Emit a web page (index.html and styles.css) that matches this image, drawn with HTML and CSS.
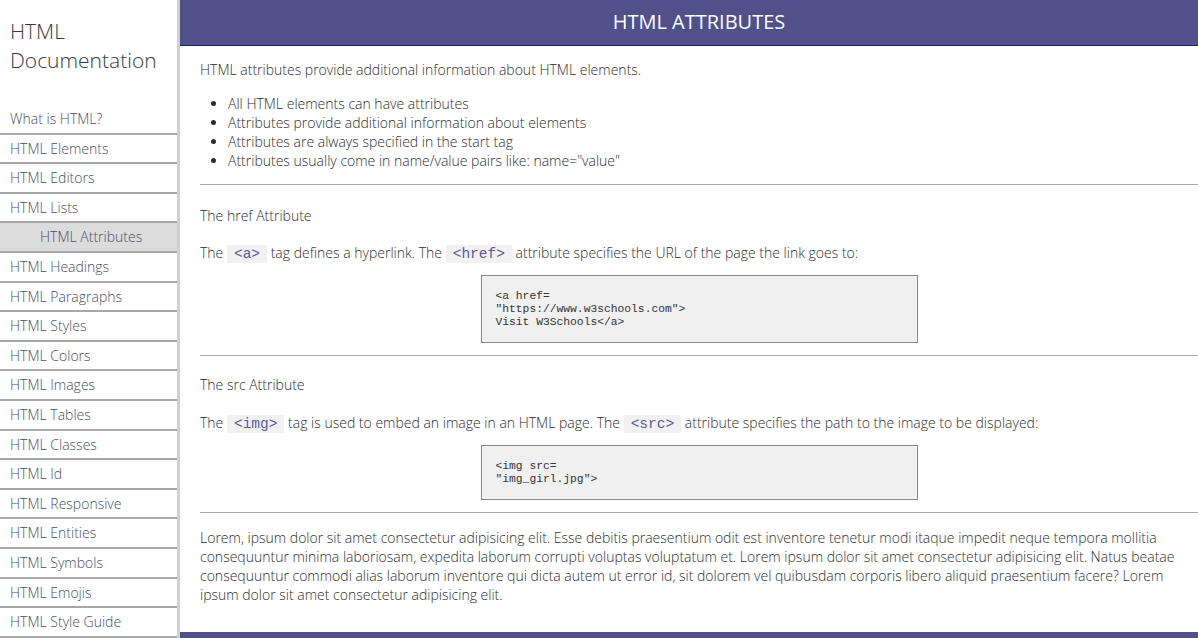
FILE: index.html
```html
<!DOCTYPE html>
<html lang="en">
<head>
<meta charset="utf-8">
<title>HTML Attributes</title>
<link rel="stylesheet" href="styles.css">
</head>
<body>
<div class="page">
  <nav class="sidebar">
    <header class="side-title">HTML Documentation</header>
    <ul class="nav">
      <li class="nav-item">What is HTML?</li>
      <li class="nav-item">HTML Elements</li>
      <li class="nav-item">HTML Editors</li>
      <li class="nav-item">HTML Lists</li>
      <li class="nav-item active">HTML Attributes</li>
      <li class="nav-item">HTML Headings</li>
      <li class="nav-item">HTML Paragraphs</li>
      <li class="nav-item">HTML Styles</li>
      <li class="nav-item">HTML Colors</li>
      <li class="nav-item">HTML Images</li>
      <li class="nav-item">HTML Tables</li>
      <li class="nav-item">HTML Classes</li>
      <li class="nav-item">HTML Id</li>
      <li class="nav-item">HTML Responsive</li>
      <li class="nav-item">HTML Entities</li>
      <li class="nav-item">HTML Symbols</li>
      <li class="nav-item">HTML Emojis</li>
      <li class="nav-item">HTML Style Guide</li>
    </ul>
  </nav>
  <main class="main">
    <header class="main-header">HTML ATTRIBUTES</header>
    <section class="content">
      <p class="text">HTML attributes provide additional information about HTML elements.</p>
      <ul class="bullets">
        <li>All HTML elements can have attributes</li>
        <li>Attributes provide additional information about elements</li>
        <li>Attributes are always specified in the start tag</li>
        <li>Attributes usually come in name/value pairs like: name="value"</li>
      </ul>
      <hr class="rule">
      <h3 class="sub">The href Attribute</h3>
      <p class="text">The <code class="tag">&lt;a&gt;</code> tag defines a hyperlink. The <code class="tag">&lt;href&gt;</code> attribute specifies the URL of the page the link goes to:</p>
      <pre class="code">&lt;a href=
"https://www.w3schools.com"&gt;
Visit W3Schools&lt;/a&gt;</pre>
      <hr class="rule">
      <h3 class="sub sub-2">The src Attribute</h3>
      <p class="text">The <code class="tag">&lt;img&gt;</code> tag is used to embed an image in an HTML page. The <code class="tag">&lt;src&gt;</code> attribute specifies the path to the image to be displayed:</p>
      <pre class="code">&lt;img src=
"img_girl.jpg"&gt;</pre>
      <hr class="rule">
      <p class="text lorem">Lorem, ipsum dolor sit amet consectetur adipisicing elit. Esse debitis praesentium odit est inventore tenetur modi itaque impedit neque tempora mollitia consequuntur minima laboriosam, expedita laborum corrupti voluptas voluptatum et. Lorem ipsum dolor sit amet consectetur adipisicing elit. Natus beatae consequuntur commodi alias laborum inventore qui dicta autem ut error id, sit dolorem vel quibusdam corporis libero aliquid praesentium facere? Lorem ipsum dolor sit amet consectetur adipisicing elit.</p>
    </section>
    <footer class="main-footer"></footer>
  </main>
</div>
</body>
</html>
```
FILE: styles.css
```css
* { box-sizing: border-box; }
html, body { margin: 0; padding: 0; }
body {
  font-family: "Open Sans", "Liberation Sans", sans-serif;
  font-weight: 300;
  color: #2e2e2e;
  background: #fff;
}
.page {
  display: flex;
  min-height: 100vh;
}
.sidebar {
  width: 180px;
  flex: none;
  border-right: 3px solid #d0d0d0;
  background: #fff;
}
.side-title {
  font-size: 21px;
  line-height: 29px;
  color: #3a3a3a;
  padding: 17px 10px 0 10px;
  height: 105px;
}
.nav {
  list-style: none;
  margin: 0;
  padding: 0;
}
.nav-item {
  font-size: 14px;
  color: #4a4f5e;
  height: 29.6px;
  line-height: 28.6px;
  padding-left: 10px;
  border-bottom: 2px solid #a8a8a8;
}
.nav-item.active {
  background: #dcdcdc;
  padding-left: 40px;
}
.main {
  flex: 1;
  display: flex;
  flex-direction: column;
}
.main-header {
  height: 46px;
  background: #50508a;
  border-bottom: 1px solid #1d1d6b;
  color: #fff;
  font-weight: 400;
  font-size: 20px;
  line-height: 44px;
  text-align: center;
  padding-left: 20px;
}
.content {
  padding: 14px 0 8px 20px;
  flex: 1;
}
.text {
  font-size: 14px;
  line-height: 19px;
  margin: 0 20px 0 0;
}
.bullets {
  font-size: 14px;
  line-height: 19px;
  margin: 15px 0 14px 0;
  padding-left: 28px;
}
.rule {
  border: 0;
  border-top: 1px solid #aaa;
  margin: 0;
}
.sub {
  font-size: 14px;
  font-weight: 300;
  line-height: 19px;
  margin: 21px 0 18px 0;
}
.sub-2 {
  margin-top: 19px;
  margin-bottom: 19px;
}
.tag {
  font-family: "Liberation Mono", "Courier New", monospace;
  font-size: 14.5px;
  line-height: 17px;
  color: #5a5aa0;
  background: #f1f1f1;
  padding: 1px 7px;
}
.code {
  width: 437px;
  margin: 12px auto 12px auto;
  background: #f0f0f0;
  border: 1px solid #888;
  padding: 14px 14px 13px 14px;
  font-family: "Liberation Mono", "Courier New", monospace;
  font-size: 11.3px;
  line-height: 13px;
  color: #333;
  white-space: pre;
}
.lorem {
  margin-top: 15px;
}
.main-footer {
  height: 6px;
  background: #50508a;
}
```
